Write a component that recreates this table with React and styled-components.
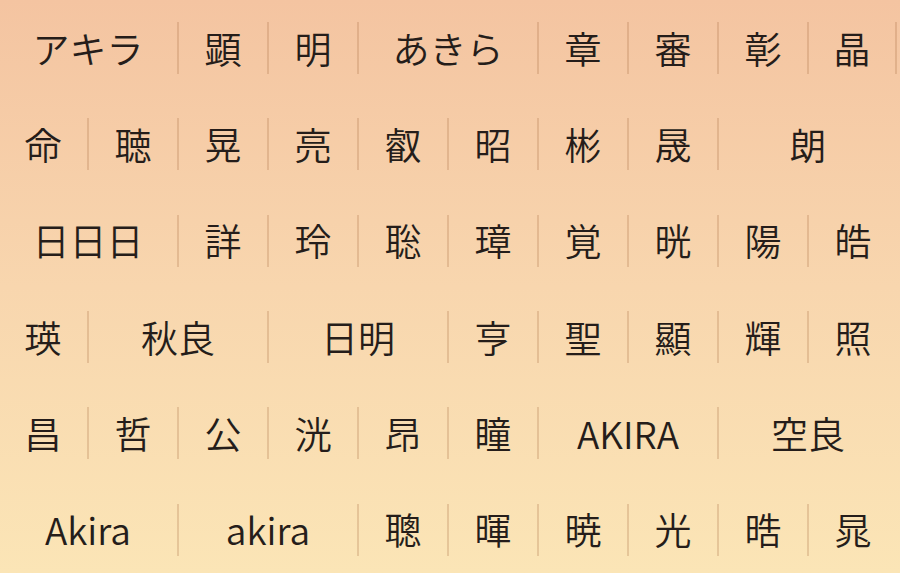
import React from "react";
import styled, { createGlobalStyle } from "styled-components";

const GlobalStyle = createGlobalStyle`
  html, body {
    margin: 0;
    padding: 0;
    height: 100%;
  }
  body {
    overflow: hidden;
    font-family: "Noto Sans CJK JP", "Noto Sans", sans-serif;
  }
`;

// 名前の候補: [表記, 幅(列数), 右端の区切り線]
const rows = [
  [["アキラ", 2], ["顕", 1], ["明", 1], ["あきら", 2], ["章", 1], ["審", 1], ["彰", 1], ["晶", 1, true]],
  [["命", 1], ["聴", 1], ["晃", 1], ["亮", 1], ["叡", 1], ["昭", 1], ["彬", 1], ["晟", 1], ["朗", 2]],
  [["日日日", 2], ["詳", 1], ["玲", 1], ["聡", 1], ["璋", 1], ["覚", 1], ["晄", 1], ["陽", 1], ["皓", 1]],
  [["瑛", 1], ["秋良", 2], ["日明", 2], ["亨", 1], ["聖", 1], ["顯", 1], ["輝", 1], ["照", 1]],
  [["昌", 1], ["哲", 1], ["公", 1], ["洸", 1], ["昂", 1], ["瞳", 1], ["AKIRA", 2], ["空良", 2]],
  [["Akira", 2], ["akira", 2], ["聰", 1], ["暉", 1], ["暁", 1], ["光", 1], ["晧", 1], ["晁", 1]],
];

function App() {
  return (
    <Page>
      <GlobalStyle />
      <NameGrid>
        {rows.map((row, r) =>
          row.map(([name, span, trailing], i) => (
            <NameCell
              key={`${r}-${i}`}
              $span={span}
              $divider={i < row.length - 1 || trailing}
              $trailing={trailing}
            >
              {name}
            </NameCell>
          ))
        )}
      </NameGrid>
    </Page>
  );
}

export default App;

const Page = styled.div`
  width: 900px;
  height: 573px;
  overflow: hidden;
  background: linear-gradient(180deg, #f4c4a1 0%, #f8d6ae 50%, #fbe5b6 100%);
`;

const NameGrid = styled.div`
  display: grid;
  grid-template-columns: repeat(10, 90px);
  grid-auto-rows: 96.3px;
  align-items: center;
`;

const NameCell = styled.div`
  grid-column: span ${(props) => props.$span};
  height: 52px;
  display: flex;
  align-items: center;
  justify-content: center;
  box-sizing: border-box;
  border-right: 2px solid
    ${(props) => (props.$divider ? "rgba(170, 112, 70, 0.26)" : "transparent")};
  margin-right: ${(props) => (props.$trailing ? "2px" : "0")};
  transform: translateX(-1px);
  font-size: 37px;
  font-weight: 350;
  line-height: 1;
  color: #251d1a;
`;
